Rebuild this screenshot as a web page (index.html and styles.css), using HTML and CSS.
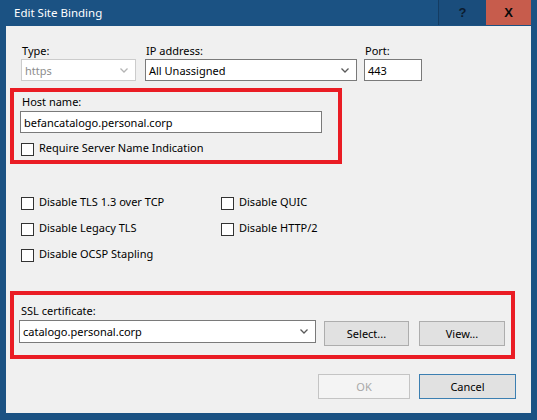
FILE: index.html
```html
<!DOCTYPE html>
<html>

<head>
  <title>Edit Site Binding</title>
  <link rel="stylesheet" href="styles.css">
</head>

<body>
  <div class="window">
    <div class="titlebar">
      <span class="title">Edit Site Binding</span>
      <span class="tb-btn help">?</span>
      <span class="tb-btn close">X</span>
    </div>

    <div class="content">
      <div class="fields">
        <div class="field f-type">
          <label>Type:</label>
          <div class="select disabled">
            <span>https</span>
            <svg width="8" height="5" viewBox="0 0 8 5"><polyline points="0.5,0.5 4,4 7.5,0.5" /></svg>
          </div>
        </div>
        <div class="field f-ip">
          <label>IP address:</label>
          <div class="select">
            <span>All Unassigned</span>
            <svg width="8" height="5" viewBox="0 0 8 5"><polyline points="0.5,0.5 4,4 7.5,0.5" /></svg>
          </div>
        </div>
        <div class="field f-port">
          <label>Port:</label>
          <div class="textbox">443</div>
        </div>
      </div>

      <div class="mark host-box">
        <label>Host name:</label>
        <div class="textbox host-input">befancatalogo.personal.corp</div>
        <div class="check"><span class="box"></span>Require Server Name Indication</div>
      </div>

      <div class="options">
        <div class="check"><span class="box"></span>Disable TLS 1.3 over TCP</div>
        <div class="check"><span class="box"></span>Disable QUIC</div>
        <div class="check"><span class="box"></span>Disable Legacy TLS</div>
        <div class="check"><span class="box"></span>Disable HTTP/2</div>
        <div class="check"><span class="box"></span>Disable OCSP Stapling</div>
      </div>

      <div class="mark ssl-box">
        <label>SSL certificate:</label>
        <div class="ssl-row">
          <div class="select cert-select">
            <span>catalogo.personal.corp</span>
            <svg width="8" height="5" viewBox="0 0 8 5"><polyline points="0.5,0.5 4,4 7.5,0.5" /></svg>
          </div>
          <button class="btn btn-select">Select...</button>
          <button class="btn btn-view">View...</button>
        </div>
      </div>

      <div class="actions">
        <button class="btn btn-ok" disabled>OK</button>
        <button class="btn btn-cancel">Cancel</button>
      </div>
    </div>
  </div>
</body>

</html>
```

FILE: styles.css
```css
html,
body {
  margin: 0;
  padding: 0;
}

body {
  font-family: "Noto Sans", "Open Sans", sans-serif;
  font-size: 11px;
  color: #000;
}

.window {
  width: 537px;
  height: 420px;
  box-sizing: border-box;
  background: #1b5283;
  padding: 0 6px 7px 6px;
  display: flex;
  flex-direction: column;
}

.titlebar {
  height: 26px;
  display: flex;
  align-items: flex-start;
  margin-right: -6px;
}

.title {
  color: #fff;
  font-size: 11.5px;
  padding: 5px 0 0 8px;
  line-height: 15px;
  flex-grow: 1;
}

.tb-btn {
  height: 25px;
  line-height: 25px;
  text-align: center;
  font-weight: bold;
  font-family: "Liberation Sans", sans-serif;
  font-size: 13px;
}

.help {
  width: 47px;
  background: #1a4d7c;
  border-left: 1px solid #143c62;
  color: #0c1c30;
}

.close {
  width: 45px;
  background: #c75c4c;
  color: #0a0a0a;
  margin-right: 6px;
}

.content {
  flex-grow: 1;
  background: #f0f0f0;
  padding: 17px 15px 0 15px;
}

label {
  display: block;
  line-height: 15px;
}

/* top row */
.fields {
  display: flex;
}

.field label {
  margin-left: 1px;
  margin-bottom: 1px;
}

.f-type {
  width: 115px;
  margin-right: 9px;
}

.f-ip {
  width: 212px;
  margin-right: 7px;
}

.f-port {
  width: 58px;
}

.select,
.textbox {
  box-sizing: border-box;
  height: 22px;
  background: #fff;
  border: 1px solid #7a7a7a;
  display: flex;
  align-items: center;
  padding: 0 7px 0 3px;
  white-space: nowrap;
}

.select span {
  flex-grow: 1;
}

.select svg polyline {
  fill: none;
  stroke: #5a5a5a;
  stroke-width: 1.3;
}

.select.disabled {
  border-color: #cccccc;
  color: #8d8d8d;
}

.select.disabled svg polyline {
  stroke: #b4b4b4;
}

/* red marks */
.mark {
  border: 4px solid #ea1c24;
  margin-left: -11px;
  box-sizing: border-box;
}

.host-box {
  width: 332px;
  margin-top: 7px;
  padding: 2px 6px 4px 6px;
}

.host-box label {
  margin-left: 2px;
  margin-bottom: 2px;
}

.host-input {
  width: 302px;
  height: 22px;
}

.host-box .check {
  margin-top: 8px;
  margin-left: 1px;
}

/* checkboxes: text sits a little above the box centre */
.check {
  display: flex;
  align-items: flex-start;
  height: 15px;
  line-height: 13px;
}

.box {
  width: 13px;
  height: 13px;
  box-sizing: border-box;
  border: 1px solid #333;
  background: #fff;
  margin: 2px 5px 0 0;
  flex-shrink: 0;
}

.options {
  display: grid;
  grid-template-columns: 200px auto;
  row-gap: 11px;
  margin-top: 31px;
}

.ssl-box {
  width: 505px;
  margin-top: 29px;
  padding: 8px 5px 9px 5px;
}

.ssl-box label {
  margin-left: 2px;
  margin-bottom: 2px;
}

.ssl-row {
  display: flex;
  align-items: flex-start;
}

.cert-select {
  width: 297px;
  height: 23px;
  margin-right: 8px;
}

/* buttons */
.btn {
  font-family: inherit;
  font-size: 11px;
  height: 25px;
  background: #e1e1e1;
  border: 1px solid #adadad;
  color: #000;
  padding: 0;
  margin: 0;
}

.btn-select {
  width: 85px;
  margin-top: 1px;
  margin-right: 10px;
}

.btn-view {
  width: 86px;
  margin-top: 1px;
}

.actions {
  display: flex;
  justify-content: flex-end;
  gap: 9px;
  margin-top: 15px;
}

.btn-ok {
  width: 92px;
  background: #f4f4f4;
  border-color: #c4c4c4;
  color: #a8a8a8;
}

.btn-cancel {
  width: 97px;
  border-color: #3c7fb1;
}
```
